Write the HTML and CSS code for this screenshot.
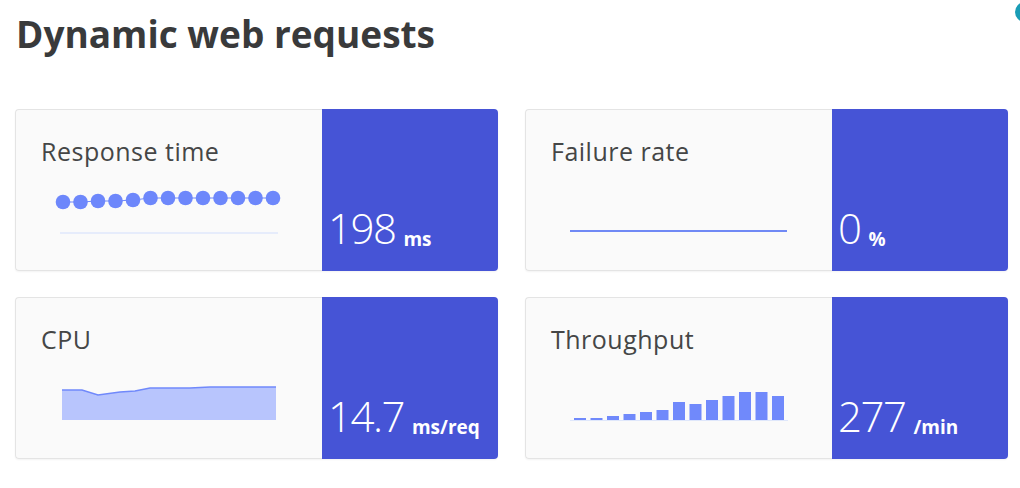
FILE: index.html
```html
<!DOCTYPE html>
<html>
<head>
	<title>Dynamic web requests</title>
	<meta name="viewport" content="width=device-width, initial-scale=1.0">
	<link rel="stylesheet" href="styles.css">
</head>
<body>
  <h1 class="title">Dynamic web requests</h1>
  <span class="corner"></span>

  <div class="tiles">
  	<div class="tile">
  		<div class="tile-info">
  			<div class="tile-label">Response time</div>
  			<svg class="spark" width="218" height="56" viewBox="0 0 218 56">
  				<line x1="0" y1="54" x2="218" y2="54" stroke="#dfe7fb" stroke-width="1.5"/>
  				<polyline points="3,23 20.5,23 38,22 55.5,22 73,21 90.5,19 108,19 125.5,19 143,19 160.5,19 178,19 195.5,19 213,19" fill="none" stroke="#7089fb" stroke-width="1"/>
  				<g fill="#6d87fb">
  					<circle cx="3" cy="23" r="7.3"/>
  					<circle cx="20.5" cy="23" r="7.3"/>
  					<circle cx="38" cy="22" r="7.3"/>
  					<circle cx="55.5" cy="22" r="7.3"/>
  					<circle cx="73" cy="21" r="7.3"/>
  					<circle cx="90.5" cy="19" r="7.3"/>
  					<circle cx="108" cy="19" r="7.3"/>
  					<circle cx="125.5" cy="19" r="7.3"/>
  					<circle cx="143" cy="19" r="7.3"/>
  					<circle cx="160.5" cy="19" r="7.3"/>
  					<circle cx="178" cy="19" r="7.3"/>
  					<circle cx="195.5" cy="19" r="7.3"/>
  					<circle cx="213" cy="19" r="7.3"/>
  				</g>
  			</svg>
  		</div>
  		<div class="tile-value"><span class="num">198</span><span class="unit">ms</span></div>
  	</div>

  	<div class="tile">
  		<div class="tile-info">
  			<div class="tile-label">Failure rate</div>
  			<svg class="spark" width="218" height="56" viewBox="0 0 218 56">
  				<line x1="0" y1="52" x2="217" y2="52" stroke="#7089f5" stroke-width="2"/>
  			</svg>
  		</div>
  		<div class="tile-value"><span class="num">0</span><span class="unit">%</span></div>
  	</div>

  	<div class="tile">
  		<div class="tile-info">
  			<div class="tile-label">CPU</div>
  			<svg class="spark" width="218" height="56" viewBox="0 0 218 56">
  				<path d="M2 23 L22 23 L38 28 L60 25 L75 24 L90 21 L130 21 L150 20 L216 20 L216 53 L2 53 Z" fill="#b8c5fd"/>
  				<path d="M2 23 L22 23 L38 28 L60 25 L75 24 L90 21 L130 21 L150 20 L216 20" fill="none" stroke="#7089fb" stroke-width="1.5"/>
  			</svg>
  		</div>
  		<div class="tile-value"><span class="num">14.7</span><span class="unit">ms/req</span></div>
  	</div>

  	<div class="tile">
  		<div class="tile-info">
  			<div class="tile-label">Throughput</div>
  			<svg class="spark" width="218" height="56" viewBox="0 0 218 56">
  				<line x1="0" y1="53.5" x2="218" y2="53.5" stroke="#dfe7fb" stroke-width="1"/>
  				<g fill="#7089fb">
  					<rect x="4" y="51" width="12" height="2"/>
  					<rect x="20.5" y="51" width="12" height="2"/>
  					<rect x="37" y="49" width="12" height="4"/>
  					<rect x="53.5" y="47" width="12" height="6"/>
  					<rect x="70" y="45" width="12" height="8"/>
  					<rect x="86.5" y="43" width="12" height="10"/>
  					<rect x="103" y="35" width="12" height="18"/>
  					<rect x="119.5" y="37" width="12" height="16"/>
  					<rect x="136" y="33" width="12" height="20"/>
  					<rect x="152.5" y="29" width="12" height="24"/>
  					<rect x="169" y="25" width="12" height="28"/>
  					<rect x="185.5" y="25" width="12" height="28"/>
  					<rect x="202" y="29" width="12" height="24"/>
  				</g>
  			</svg>
  		</div>
  		<div class="tile-value"><span class="num">277</span><span class="unit">/min</span></div>
  	</div>
  </div>
</body>
</html>
```

FILE: styles.css
```css
*{
	box-sizing: border-box;
}
html, body{
	overflow: hidden;
}
body{
	margin: 0;
	padding: 0 15px;
	background: white;
	font-family: "Open Sans", sans-serif;
	position: relative;
	height: 488px;
}
.title{
	margin: 0 0 53px 1px;
	padding-top: 12px;
	font-size: 37px;
	line-height: 44px;
	font-weight: 700;
	color: #393a3b;
}
.corner{
	position: absolute;
	top: 2px;
	right: -15px;
	width: 20px;
	height: 20px;
	border-radius: 50%;
	background: #1a9db6;
}

.tiles{
	display: grid;
	grid-template-columns: 483px 483px;
	column-gap: 27px;
	row-gap: 26px;
}
.tile{
	display: flex;
	height: 162px;
	border-radius: 4px;
	box-shadow: 0px 1px 2px rgba(0,0,0,0.05);
}
.tile-info{
	flex: 1;
	background: #fafafa;
	border: 1px solid #e4e4e4;
	border-right: 0;
	border-radius: 4px 0 0 4px;
	padding: 25px 24px 0 25px;
}
.tile-label{
	font-size: 25px;
	line-height: 32px;
	letter-spacing: 0.5px;
	color: #454646;
}
.spark{
	display: block;
	margin: 12px 0 0 19px;
	overflow: visible;
}
.tile-value{
	width: 176px;
	background: #4654d6;
	border-radius: 0 4px 4px 0;
	color: white;
	display: flex;
	align-items: flex-end;
	padding: 0 0 22px 6px;
	line-height: 42px;
	white-space: nowrap;
}
.tile-value .num{
	font-size: 42px;
	font-weight: 300;
	letter-spacing: -1.5px;
}
.tile-value .unit{
	font-size: 19px;
	font-weight: 700;
	line-height: 1;
	margin-left: 8px;
}
```
